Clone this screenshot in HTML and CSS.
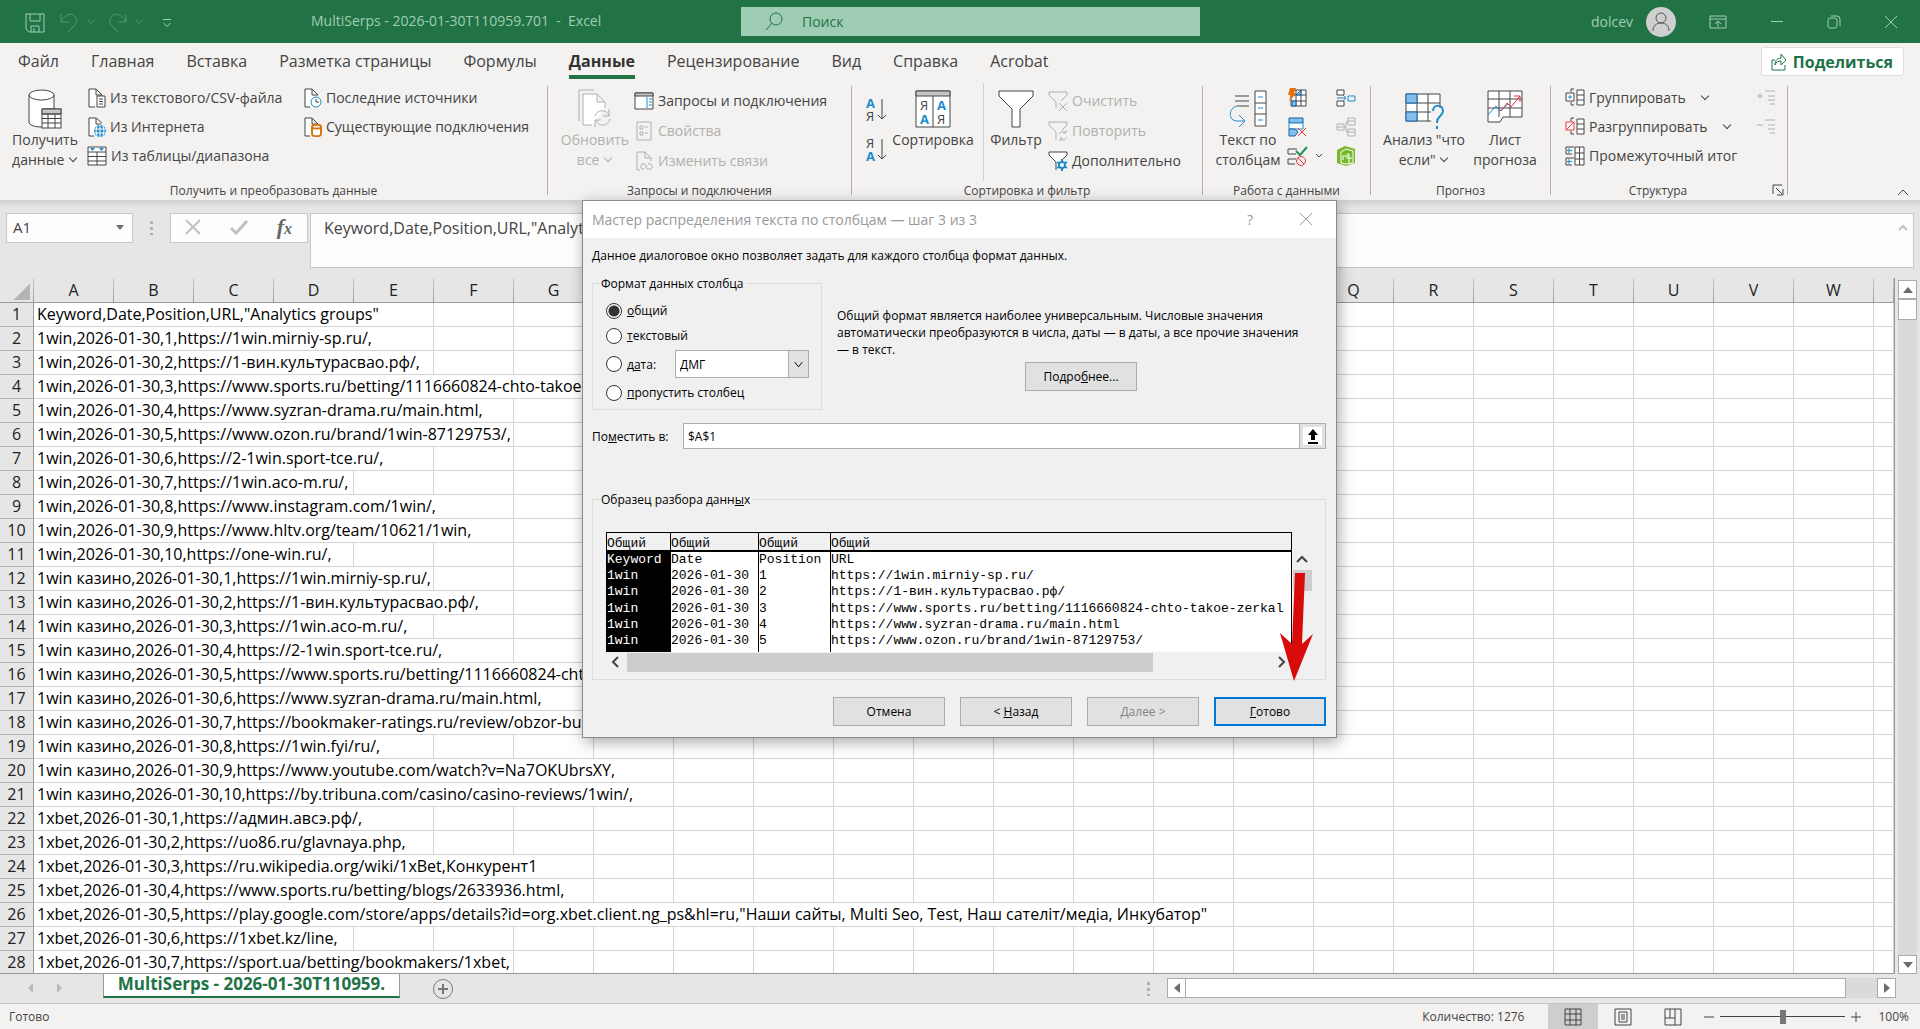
FILE: index.html
```html
<!DOCTYPE html>
<html lang="ru">
<head>
<meta charset="utf-8">
<title>MultiSerps - 2026-01-30T110959.701 - Excel</title>
<link rel="stylesheet" href="styles.css">
</head>
<body>
<header class="titlebar">
  <div class="qat">
    <button aria-label="Сохранить"><svg width="20" height="20" viewBox="0 0 20 20"><path d="M1 1h18v18H4l-3-3zM5 1v7h10V1M6 19v-6h8v6M9 15v4"/></svg></button>
    <button class="faded" aria-label="Отменить"><svg width="36" height="20" viewBox="0 0 36 20"><path d="M1 1v8h8M1 9C4 3 9 0 13 2s5 7 1 11l-6 6M28 7l3.500 3.500L35 7"/></svg></button>
    <button class="faded" aria-label="Вернуть"><svg width="36" height="20" viewBox="0 0 36 20"><path d="M18 1v8h-8M18 9C15 3 10 0 6 2s-6 7-2 11l6 6M28 7l3.500 3.500L35 7"/></svg></button>
    <button aria-label="Настройка панели"><svg width="10" height="10" viewBox="0 0 10 10"><path d="M1 1.500h8M1.500 5L5 8.500 8.500 5"/></svg></button>
  </div>
  <div class="doc-title">MultiSerps - 2026-01-30T110959.701&nbsp; -&nbsp; Excel</div>
  <label class="search"><svg width="18" height="20" viewBox="0 0 18 20"><circle cx="11" cy="7" r="6"/><path d="M7 11l-6 7"/></svg><input type="text" placeholder="Поиск" aria-label="Поиск"></label>
  <div class="account">
    <span>dolcev</span>
    <svg class="avatar" width="30" height="30" viewBox="0 0 30 30"><circle class="face" cx="15" cy="15" r="15"/><circle cx="15" cy="11" r="5"/><path d="M7 24c0-5 3-8 8-8s8 3 8 8"/></svg>
    <button aria-label="Параметры ленты"><svg width="18" height="14" viewBox="0 0 18 14"><path d="M1 1h16v12H1zM1 4h16M9 12V6M6 9l3-3 3 3"/></svg></button>
    <button aria-label="Свернуть"><svg width="14" height="14" viewBox="0 0 14 14"><path d="M1 6.500h12"/></svg></button>
    <button aria-label="Восстановить"><svg width="14" height="14" viewBox="0 0 14 14"><rect x="1" y="3" width="9" height="10" rx="2"/><path d="M4 1h6q3 0 3 3v7"/></svg></button>
    <button aria-label="Закрыть"><svg width="14" height="14" viewBox="0 0 14 14"><path d="M1 1l12 12M13 1L1 13"/></svg></button>
  </div>
</header>

<nav class="tabs">
  <a href="#">Файл</a><a href="#">Главная</a><a href="#">Вставка</a><a href="#">Разметка страницы</a><a href="#">Формулы</a><a href="#" class="active">Данные</a><a href="#">Рецензирование</a><a href="#">Вид</a><a href="#">Справка</a><a href="#">Acrobat</a>
  <button class="share"><svg width="16" height="18" viewBox="0 0 16 18"><path d="M4 7H1v10h13v-5M4 12c0-5 3-7 6-7V1l5 6-5 5V8c-3 0-5 1-6 4z"/></svg>Поделиться</button>
</nav>

<section class="ribbon">
  <div class="group g-get">
    <div class="tools">
      <button class="big"><svg width="36" height="40" viewBox="0 0 36 40"><path class="w" d="M2 6v27c0 3 5 5 13 5h2V20h10V6"/><ellipse class="w" cx="14.500" cy="6" rx="12.500" ry="5"/><rect class="w" x="15" y="20" width="19" height="19"/><path class="gray" d="M15 20h19v5H15z"/><path d="M15 25h19M15 29.500h19M15 34h19M21 25v14M28 25v14"/></svg><span>Получить<br>данные <i class="chev"></i></span></button>
      <div class="col">
        <button class="small"><svg width="19" height="20" viewBox="0 0 19 20"><path class="w" d="M8 19H2V1h7l6 6v3M9 1v6h6"/><path class="w" d="M10 8h8v11h-8zM12 11h4M12 13.500h4M12 16h4"/></svg>Из текстового/CSV-файла</button>
        <button class="small"><svg width="19" height="20" viewBox="0 0 19 20"><path class="w" d="M7 19H2V1h7l6 5M9 1v6h5"/><circle class="bf" cx="13" cy="14" r="6"/><path class="ws" d="M7 12h12M7 16h12M13 8v12M10 9q-2 5 0 10M16 9q2 5 0 10"/></svg>Из Интернета</button>
        <button class="small"><svg width="20" height="20" viewBox="0 0 20 20"><path class="w" d="M1 1h18v18H1z"/><path d="M1 6h18M1 10.500h18M1 15h18M10 6v13"/><path class="bf" d="M3 2h5L5.500 5zM12 2h5l-2.500 3z"/></svg>Из таблицы/диапазона</button>
      </div>
      <div class="col">
        <button class="small"><svg width="19" height="20" viewBox="0 0 19 20"><path class="w" d="M7 19H2V1h7l6 6M9 1v6h6"/><circle class="w b" cx="13" cy="14" r="5"/><path d="M13 11v3h3"/></svg>Последние источники</button>
        <button class="small"><svg width="19" height="20" viewBox="0 0 19 20"><path class="w" d="M7 19H2V1h7l6 6M9 1v6h6"/><path class="w o" d="M9 10v7c0 3 9 3 9 0v-7c0-3-9-3-9 0c0 2 9 2 9 0"/></svg>Существующие подключения</button>
      </div>
    </div>
    <h2>Получить и преобразовать данные</h2>
  </div>

  <div class="group g-query">
    <div class="tools">
      <button class="big" disabled><svg width="36" height="40" viewBox="0 0 36 40"><path d="M2 32V1h15"/><path class="w" d="M15 36H6V5h14l8 8v6M20 5v8h8"/><path d="M18 27c2-7 12-7 14 0M32 20v7h-6M33 30c-2 8-12 8-14 1M18 38v-7h6"/></svg><span>Обновить<br>все <i class="chev"></i></span></button>
      <div class="col wide">
        <button class="small"><svg width="20" height="20" viewBox="0 0 20 20"><path class="w" d="M1 2h18v16H1z"/><path class="gray" d="M1 2h18v3H1z"/><path class="b" d="M13 6v11M15 8h3M15 11h3M15 14h3"/></svg>Запросы и подключения</button>
        <button class="small" disabled><svg width="20" height="20" viewBox="0 0 20 20"><path d="M3 1h14v18H3zM6 5h3v3H6zM6 11h3v3H6zM11 6h3M11 12h3"/></svg>Свойства</button>
        <button class="small" disabled><svg width="20" height="20" viewBox="0 0 20 20"><path d="M6 19H3V1h8l6 6v3M11 1v6h6"/><path d="M10 18H8q-3-3 0-5h3q2 1 1 3M14 13h3q3 3 0 5h-4q-2-1 0-3"/></svg>Изменить связи</button>
      </div>
    </div>
    <h2>Запросы и подключения</h2>
  </div>

  <div class="group g-sort">
    <div class="tools">
      <div class="col order">
        <button aria-label="По возрастанию"><svg width="22" height="26" viewBox="0 0 22 26"><text class="bt" x="1" y="12">А</text><text x="1" y="25">Я</text><path d="M17 3v20M13 19l4 4 4-4"/></svg></button>
        <button aria-label="По убыванию"><svg width="22" height="26" viewBox="0 0 22 26"><text x="1" y="12">Я</text><text class="bt" x="1" y="25">А</text><path d="M17 3v20M13 19l4 4 4-4"/></svg></button>
      </div>
      <button class="big"><svg width="36" height="40" viewBox="0 0 36 40"><path class="w" d="M1 2h34v36H1z"/><path class="gray" d="M1 2h34v5H1z"/><path d="M18 7v31"/><text x="5" y="21">Я</text><text class="bt" x="5" y="35">А</text><text class="bt" x="22" y="21">А</text><text x="22" y="35">Я</text></svg><span>Сортировка</span></button>
      <button class="big filter"><svg width="36" height="40" viewBox="0 0 36 40"><path class="w" d="M1 2h34v5L22 20v18h-8V20L1 7z"/></svg><span>Фильтр</span></button>
      <div class="col wide">
        <button class="small" disabled><svg width="20" height="20" viewBox="0 0 20 20"><path d="M8 17v-6L1 4V1h18v3l-6 6M11 12l8 8M19 12l-8 8"/></svg>Очистить</button>
        <button class="small" disabled><svg width="20" height="20" viewBox="0 0 20 20"><path d="M8 19v-8L1 4V1h18v3l-5 5M11 13q3-4 7-1v-3M18 12h-3M19 16q-3 5-7 2v2M12 17h3"/></svg>Повторить</button>
        <button class="small"><svg width="20" height="20" viewBox="0 0 20 20"><path class="w" d="M8 19v-8L1 4V1h18v3l-5 5"/><path class="b q" d="M14 8v12M9 11l10 6M19 11L9 17"/><circle class="w b q" cx="14" cy="14" r="3"/></svg>Дополнительно</button>
      </div>
    </div>
    <h2>Сортировка и фильтр</h2>
  </div>

  <div class="group g-data">
    <div class="tools">
      <button class="big"><svg width="40" height="40" viewBox="0 0 40 40"><path d="M7 7h14M7 12h14M9 17h12"/><path class="w" d="M27 2h11v35H27zM27 14h11M27 25h11"/><path class="b" d="M30 8h5M30 19h5M30 31h5M9 17c-9 2-9 15 0 15h7M11 26l6 6-6 6"/></svg><span>Текст по<br>столбцам</span></button>
      <div class="col icons">
        <button aria-label="Мгновенное заполнение"><svg width="20" height="20" viewBox="0 0 20 20"><path class="w" d="M4 2h15v16H4zM4 7h15M4 13h15M9 2v16M14 2v16"/><path class="lb" d="M9 7l5-5v5zM5 13h4v5H5z"/><path class="of" d="M3 0h6L7 5h3l-8 8 2-6H1z"/></svg></button>
        <button aria-label="Удалить дубликаты"><svg width="20" height="20" viewBox="0 0 20 20"><path class="lb" d="M2 1h14v5H2z"/><path class="w b" d="M2 6h14v6H2z"/><path class="lb" d="M2 12h6l3 3-3 4H2z"/><path class="r" d="M11 11l8 8M19 11l-8 8"/></svg></button>
        <button aria-label="Проверка данных"><svg width="36" height="20" viewBox="0 0 36 20"><path d="M10 3H1v5h8M9 13H1v5h7"/><path class="g" d="M9 5l4 4 7-8"/><circle class="r" cx="14" cy="15" r="4.500"/><path class="r" d="M11 12l6 6"/><path d="M29 8l3 3 3-3"/></svg></button>
      </div>
      <div class="col icons">
        <button aria-label="Консолидация"><svg width="20" height="20" viewBox="0 0 20 20"><path class="w" d="M1 2h7v5H1zM1 13h7v5H1z"/><path class="b" d="M1 10h9M7 7l3 3-3 3M12 8h7v5h-7z"/></svg></button>
        <button disabled aria-label="Отношения"><svg width="20" height="20" viewBox="0 0 20 20"><path d="M1 7h7v6H1zM12 1h7v7h-7zM12 12h7v7h-7zM8 10h2V5h2M10 10v5h2M1 10h6M12 4h7M12 15h7"/></svg></button>
        <button aria-label="Управление моделью"><svg width="20" height="20" viewBox="0 0 20 20"><path class="gf" d="M1 4l8-4 10 3v14l-9 3-9-3z"/><path class="ws" d="M5 17V6l5-3 7 2v12l-7 1zM7 14v-4h5V7M10 12h6M13 8v9"/></svg></button>
      </div>
    </div>
    <h2>Работа с данными</h2>
  </div>

  <div class="group g-cast">
    <div class="tools">
      <button class="big"><svg width="40" height="40" viewBox="0 0 40 40"><path class="w" d="M2 5h34v27H2z"/><path d="M13 5v27M24 5v27M2 14h34M2 23h34"/><path class="lb" d="M2 5h11v9H2zM2 23h11v9H2z"/><path class="mask" d="M27 19h13v21H27z"/><path class="b q" d="M29 22c0-7 10-7 10 0 0 5-6 5-6 11v1M33 37v3"/></svg><span>Анализ "что<br>если" <i class="chev"></i></span></button>
      <button class="big"><svg width="38" height="40" viewBox="0 0 38 40"><path class="w" d="M2 2h34v26H17l-3 5H2z"/><path d="M13 2v26M24 2v26M2 10h34M2 19h34"/><path class="b" d="M2 26l8-9 4 5 8-7"/><path class="r" d="M15 22l6-8 4 4L34 7M28 7h6v6"/></svg><span>Лист<br>прогноза</span></button>
    </div>
    <h2>Прогноз</h2>
  </div>

  <div class="group g-outline">
    <div class="tools">
      <div class="col">
        <button class="small"><svg width="20" height="20" viewBox="0 0 20 20"><path d="M9 1H6v3M6 14v3h3"/><path class="w" d="M12 2h7v15h-7zM12 7h7M12 12h7M1 5h8v8H1z"/><path class="b" d="M5 7v4M3 9h4"/></svg>Группировать<i class="chev gap"></i></button>
        <button class="small"><svg width="20" height="20" viewBox="0 0 20 20"><path d="M9 1H6v3M6 14v3h3"/><path class="w" d="M12 2h7v15h-7zM12 7h7M12 12h7"/><path class="r w" d="M1 5h8v8H1zM2 12l6-6"/></svg>Разгруппировать<i class="chev gap"></i></button>
        <button class="small"><svg width="20" height="20" viewBox="0 0 20 20"><path class="w" d="M10 1h9v18h-9zM10 7h9M10 13h9M14.500 1v18"/><path d="M9 1H1v7h6M9 12H1v7h6"/><path class="b" d="M4 2v5M2 4.500h5M4 13v5M2 15.500h5"/></svg>Промежуточный итог</button>
      </div>
      <div class="col icons">
        <button disabled aria-label="Показать детали"><svg width="18" height="16" viewBox="0 0 18 16"><path d="M0 6h6M3 3v6M8 1h10M11 6h7M11 10h7M13 14h5"/></svg></button>
        <button disabled aria-label="Скрыть детали"><svg width="18" height="16" viewBox="0 0 18 16"><path d="M0 6h6M8 1h10M11 6h7M11 10h7M13 14h5"/></svg></button>
      </div>
    </div>
    <h2>Структура</h2>
    <button class="launcher" aria-label="Параметры структуры"><svg width="12" height="12" viewBox="0 0 12 12"><path d="M1 10V1h9M4 4l6 6M11 5v6H5"/></svg></button>
  </div>
  <button class="collapse" aria-label="Свернуть ленту"><svg width="12" height="8" viewBox="0 0 12 8"><path d="M1 7l5-5 5 5"/></svg></button>
</section>

<section class="formula">
  <button class="namebox">A1<svg width="8" height="5" viewBox="0 0 8 5"><path d="M0 0h8L4 5z"/></svg></button>
  <i class="grip"></i>
  <div class="fx">
    <button aria-label="Отмена"><svg width="16" height="16" viewBox="0 0 16 16"><path d="M1 1l14 14M15 1L1 15"/></svg></button>
    <button aria-label="Ввод"><svg width="18" height="16" viewBox="0 0 18 16"><path class="tick" d="M1 9l5 5L17 2"/></svg></button>
    <button class="fn" aria-label="Вставить функцию"><i>f</i><i class="sub">x</i></button>
  </div>
  <div class="input">Keyword,Date,Position,URL,"Analytics groups"<svg width="10" height="7" viewBox="0 0 10 7"><path d="M1 6l4-4 4 4"/></svg></div>
</section>

<main class="sheet">
  <div class="grid"><table id="cells"><thead></thead><tbody></tbody></table></div>
  <div class="vscroll"><button aria-label="Вверх"><svg width="10" height="6" viewBox="0 0 10 6"><path d="M0 6h10L5 0z"/></svg></button><span class="thumb"></span><span class="track"></span><button aria-label="Вниз"><svg width="10" height="6" viewBox="0 0 10 6"><path d="M0 0h10L5 6z"/></svg></button></div>
</main>

<div class="sheetbar">
  <button class="nav" aria-label="Предыдущий лист"><svg width="5" height="10" viewBox="0 0 5 10"><path d="M5 0v10L0 5z"/></svg></button>
  <button class="nav" aria-label="Следующий лист"><svg width="5" height="10" viewBox="0 0 5 10"><path d="M0 0v10l5-5z"/></svg></button>
  <a href="#" class="sheet-tab">MultiSerps - 2026-01-30T110959.</a>
  <button class="add" aria-label="Новый лист"><svg width="22" height="22" viewBox="0 0 22 22"><circle cx="11" cy="11" r="9.500"/><path class="q" d="M11 6v10M6 11h10"/></svg></button>
  <i class="grip"></i>
  <div class="hscroll"><button aria-label="Влево"><svg width="6" height="10" viewBox="0 0 6 10"><path d="M6 0v10L0 5z"/></svg></button><span class="thumb"></span><span class="track"></span><button aria-label="Вправо"><svg width="6" height="10" viewBox="0 0 6 10"><path d="M0 0v10l6-5z"/></svg></button></div>
</div>

<footer class="status">
  <span>Готово</span>
  <span class="count">Количество: 1276</span>
  <button class="view on" aria-label="Обычный"><svg width="18" height="18" viewBox="0 0 18 18"><path d="M1 1h16v16H1zM1 6h16M1 12h16M6 1v16M12 1v16"/></svg></button>
  <button class="view" aria-label="Разметка"><svg width="18" height="18" viewBox="0 0 18 18"><path d="M1 1h16v16H1zM5 4h8v10H5zM7 7h4M7 9h4M7 11h4"/></svg></button>
  <button class="view" aria-label="Страничный"><svg width="18" height="18" viewBox="0 0 18 18"><path d="M1 1h16v16H1zM1 10h10V1M6 1v9M11 10v7"/></svg></button>
  <button class="zoom" aria-label="Уменьшить"><svg width="10" height="10" viewBox="0 0 10 10"><path d="M0 5h10"/></svg></button>
  <input type="range" aria-label="Масштаб" min="0" max="100" value="50">
  <button class="zoom" aria-label="Увеличить"><svg width="10" height="10" viewBox="0 0 10 10"><path d="M0 5h10M5 0v10"/></svg></button>
  <span class="percent">100%</span>
</footer>

<div class="dialog" role="dialog" aria-labelledby="wizard">
  <div class="caption"><h1 id="wizard">Мастер распределения текста по столбцам — шаг 3 из 3</h1><button class="help">?</button><button aria-label="Закрыть"><svg width="14" height="14" viewBox="0 0 14 14"><path d="M1 1l12 12M13 1L1 13"/></svg></button></div>
  <div class="content">
    <p>Данное диалоговое окно позволяет задать для каждого столбца формат данных.</p>
    <div class="format">
      <fieldset class="types">
        <legend>Формат данных столбца</legend>
        <label><input type="radio" name="t" checked><span><u>о</u>бщий</span></label>
        <label><input type="radio" name="t"><span><u>т</u>екстовый</span></label>
        <div class="date"><label><input type="radio" name="t"><span>д<u>а</u>та:</span></label><div class="combo"><select aria-label="Формат даты"><option>ДМГ</option></select><svg width="20" height="24" viewBox="0 0 20 24"><path d="M6 10l4 5 4-5"/></svg></div></div>
        <label><input type="radio" name="t"><span><u>п</u>ропустить столбец</span></label>
      </fieldset>
      <div class="hint">
        <p>Общий формат является наиболее универсальным. Числовые значения автоматически преобразуются в числа, даты — в даты, а все прочие значения — в текст.</p>
        <button class="btn">Подро<u>б</u>нее...</button>
      </div>
    </div>
    <div class="dest"><label for="dest">По<u>м</u>естить в:</label><input id="dest" type="text" value="$A$1"><button aria-label="Выбрать ячейку"><svg width="12" height="16" viewBox="0 0 12 16"><path d="M6 1l5 6H8v5H4V7H1zM1 14h10v2H1z"/></svg></button></div>
    <fieldset class="preview">
      <legend>Образец разбора данн<u>ы</u>х</legend>
      <div class="pane">
        <table>
          <colgroup><col class="c1"><col class="c2"><col class="c3"><col></colgroup>
          <thead><tr><th>Общий</th><th>Общий</th><th>Общий</th><th>Общий</th></tr></thead>
          <tbody>
            <tr><td>Keyword</td><td>Date</td><td>Position</td><td>URL</td></tr>
            <tr><td>1win</td><td>2026-01-30</td><td>1</td><td>https://1win.mirniy-sp.ru/</td></tr>
            <tr><td>1win</td><td>2026-01-30</td><td>2</td><td>https://1-вин.культурасвао.рф/</td></tr>
            <tr><td>1win</td><td>2026-01-30</td><td>3</td><td>https://www.sports.ru/betting/1116660824-chto-takoe-zerkal</td></tr>
            <tr><td>1win</td><td>2026-01-30</td><td>4</td><td>https://www.syzran-drama.ru/main.html</td></tr>
            <tr><td>1win</td><td>2026-01-30</td><td>5</td><td>https://www.ozon.ru/brand/1win-87129753/</td></tr>
          </tbody>
        </table>
        <div class="pv"><svg width="12" height="8" viewBox="0 0 12 8"><path d="M1 7l5-5 5 5"/></svg><span></span></div>
      </div>
      <div class="ph"><svg width="8" height="12" viewBox="0 0 8 12"><path d="M7 1L2 6l5 5"/></svg><span></span><svg width="8" height="12" viewBox="0 0 8 12"><path d="M1 1l5 5-5 5"/></svg></div>
    </fieldset>
    <div class="actions"><button class="btn">Отмена</button><button class="btn">&lt; <u>Н</u>азад</button><button class="btn" disabled>Далее &gt;</button><button class="btn primary"><u>Г</u>отово</button></div>
  </div>
  <svg class="arrow" width="34" height="110" viewBox="0 0 34 110"><path d="M16 1h10l-3 71 11-10-19 47L1 61l12 11z"/></svg>
</div>
<script src="script.js"></script>
</body>
</html>
```
FILE: styles.css
```css
* { box-sizing: border-box; }
body { margin: 0; height: 100vh; display: flex; flex-direction: column; overflow: hidden; position: relative; background: #e6e6e6; color: #444; font: 15px/20px "Open Sans", "Noto Sans", sans-serif; }
button { font: inherit; color: inherit; background: none; border: 0; padding: 0; display: flex; align-items: center; white-space: nowrap; }
svg { flex: none; fill: none; stroke: currentColor; }
h1, h2, p { margin: 0; font-weight: normal; }
a { color: inherit; text-decoration: none; }

.titlebar { height: 43px; flex: none; background: #217346; color: #a0cdb4; display: flex; align-items: center; position: relative; }
.qat { display: flex; align-items: center; gap: 15px; padding-left: 25px; width: 311px; padding-top: 3px; }
.qat .faded { color: #4f9a70; margin-right: -3px; }
.qat button:last-child { margin-left: 6px; }
.doc-title { width: 430px; font-size: 14px; padding-bottom: 2px; white-space: nowrap; }
.search { width: 459px; height: 29px; background: #9fcdb3; color: #217346; display: flex; align-items: center; gap: 19px; padding-left: 24px; }
.search input { border: 0; background: none; font: inherit; font-size: 14px; color: inherit; outline: 0; padding: 0; }
.search input::placeholder { color: #217346; opacity: 1; }
.account { margin-left: auto; display: flex; align-items: center; padding-right: 22px; font-size: 14px; }
.account button { margin-left: 43px; }
.account .avatar { margin-left: 13px; }
.account .avatar + button { margin-left: 33px; }
.avatar { color: #555; }
.avatar .face { fill: #cfcfcf; stroke: none; }

.tabs { height: 36px; flex: none; background: #f3f2f1; display: flex; gap: 32px; padding: 0 16px 0 18px; font-size: 16px; line-height: 36px; }
.tabs .active { font-weight: bold; border-bottom: 4px solid #217346; color: #333; }
.share { margin: 4px 0 3px auto; background: #fff; border: 1px solid #e1dfdd; border-radius: 3px; color: #217346; font-weight: bold; padding: 0 10px 0 9px; gap: 6px; }

.ribbon { height: 121px; flex: none; background: #f3f2f1; display: flex; position: relative; padding-top: 7px; }
.group { height: 109px; display: flex; flex-direction: column; border-right: 1px solid #b3b0ad; position: relative; flex: none; }
.tools { display: flex; height: 98px; margin-top: -3px; flex: none; }
.group h2 { font-size: 12px; line-height: 20px; text-align: center; }
.g-get { width: 548px; }
.g-get .tools { padding-left: 6px; }
.g-query { width: 304px; }
.g-query .tools { padding-left: 8px; }
.g-sort { width: 351px; }
.g-sort .tools { padding-left: 10px; }
.g-data { width: 168px; }
.g-data .tools { padding-left: 9px; }
.g-cast { width: 180px; }
.g-cast .tools { padding-left: 4px; }
.g-outline { width: 237px; }
.g-outline .tools { padding-left: 14px; }
.g-outline h2 { padding-right: 22px; }
.big { flex-direction: column; align-items: center; width: 78px; padding-top: 6px; line-height: 20px; font-size: 14px; text-align: center; flex: none; }
.big svg { margin-bottom: 1px; }
.chev { display: inline-block; width: 6px; height: 6px; border: solid currentColor; border-width: 0 1px 1px 0; transform: rotate(45deg); margin: 0 2px 4px 2px; }
.chev.gap { margin-left: 12px; }
.col { display: flex; flex-direction: column; flex: none; }
.col button { height: 29px; }
.col.wide { padding-top: 3px; }
.col.wide button { height: 30px; }
.g-get .col { width: 216px; padding-left: 3px; }
.small { gap: 4px; font-size: 14px; }
button:disabled { color: #b1b0ae; }
.order { width: 30px; padding: 11px 0 0 3px; gap: 11px; }
.g-sort .big { width: 82px; margin-right: 9px; }
.g-sort .filter { border-left: 1px solid #d2d0ce; width: 65px; margin-right: 0; }
.g-data .big { width: 72px; }
.icons { width: 49px; padding-left: 3px; }
.g-cast .big { width: 64px; }
.g-cast .big:first-child { width: 98px; }
.g-outline .col:first-child { width: 189px; }
.launcher { position: absolute; right: 3px; bottom: -1px; }
.collapse { position: absolute; right: 11px; bottom: 4px; }
.w { fill: #fff; }
.gray { fill: #c8c6c4; }
.b { stroke: #1e8bcd; }
.q { stroke-width: 2; }
.bf { fill: #1e8bcd; stroke: none; }
.lb { fill: #83beec; stroke: #1664a7; }
.r { stroke: #e8373e; }
.g { stroke: #21935b; stroke-width: 2; }
.gf { fill: #77b82a; stroke: none; }
.o { stroke: #d9730d; stroke-width: 2; }
.of { fill: #e8700a; stroke: none; }
.ws { stroke: #fff; }
.mask { fill: #f3f2f1; stroke: none; }
.ribbon text { fill: #444; stroke: none; font-size: 13px; }
.ribbon .bt { fill: #1e8bcd; font-weight: bold; }

.formula { flex: none; height: 78px; display: flex; align-items: flex-start; padding: 13px 6px 0; background: linear-gradient(#cfcfcf, #e6e6e6 8px); }
.namebox { width: 127px; height: 30px; background: #fdfdfd; border: 1px solid #c6c6c6; justify-content: space-between; padding: 0 8px 2px 6px; }
.namebox svg, .vscroll svg, .hscroll svg, .nav svg { fill: #6b6b6b; stroke: none; }
.grip { width: 3px; height: 14px; background: repeating-linear-gradient(#b0b0b0 0 3px, transparent 3px 6px); margin: 8px 17px 0; }
.fx { width: 138px; height: 30px; background: #fdfdfd; border: 1px solid #c6c6c6; display: flex; align-items: center; justify-content: space-between; padding: 0 15px 2px 14px; color: #c0c0c0; stroke-width: 2; }
.tick { stroke-width: 3; }
.fn { font: bold 22px/24px "Liberation Serif", serif; color: #666; }
.fn .sub { font-size: 16px; padding-top: 4px; }
.formula .input { margin-left: 2px; flex: 1; height: 55px; background: #fdfdfd; border: 1px solid #c6c6c6; padding: 4px 5px 0 13px; display: flex; justify-content: space-between; color: #444; font-size: 16px; }
.formula .input svg { stroke: #c0c0c0; stroke-width: 2; margin-top: 6px; }

.sheet { flex: 1; min-height: 0; display: flex; gap: 3px; padding-right: 3px; }
.grid { flex: 1; overflow: hidden; border-right: 1px solid #999; border-bottom: 1px solid #999; color: #000; font-size: 16px; }
.grid table { width: 100%; table-layout: fixed; border-collapse: separate; border-spacing: 0; }
.grid th, .grid td { height: 24px; padding: 0; font-weight: normal; line-height: 23px; border: solid #d4d4d4; border-width: 0 1px 1px 0; background: #fff; white-space: nowrap; overflow: hidden; }
.grid td { padding-left: 3px; }
.grid th { background: #e6e6e6; color: #222; border-color: #b5b5b5; text-align: center; }
.grid tbody th { border-right-color: #999; }
.grid thead th { height: 25px; border-bottom-color: #999; border-image: linear-gradient(#ccc, #999) 1; border-image-width: 0 1px 1px 0; width: 80px; }
.grid thead th:first-child { width: 34px; }
.grid thead th:last-child { width: auto; }
.corner { display: block; margin: 4px 3px 2px 14px; width: 16px; height: 17px; background: linear-gradient(to bottom right, transparent 50%, #b4b4b4 50%); }
.vscroll { width: 19px; display: flex; flex-direction: column; background: #dadada; margin-top: 2px; }
.vscroll button, .hscroll button { background: #fff; border: 1px solid #ababab; justify-content: center; flex: none; width: 19px; height: 19px; }
.vscroll .thumb { height: 21px; background: #fff; border: 1px solid #ababab; }
.track { flex: 1; }

.sheetbar { height: 30px; flex: none; display: flex; align-items: flex-start; border-bottom: 1px solid #c6c6c6; padding-left: 28px; }
.nav { height: 28px; margin-right: 24px; }
.nav svg { fill: #b8b8b8; }
.sheet-tab { margin-left: 17px; width: 297px; background: #fff; color: #217346; font-weight: bold; text-align: center; padding-bottom: 2px; border: solid #999; border-width: 0 1px; border-bottom: 2px solid #217346; font-size: 17px; white-space: nowrap; }
.add { margin: 4px auto 0 32px; color: #777; }
.hscroll { display: flex; width: 729px; height: 20px; margin: 4px 24px 0 0; background: #dadada; }
.hscroll button, .hscroll .thumb { height: 20px; }
.hscroll .thumb { width: 660px; background: #fff; border: 1px solid #ababab; border-left: 0; }

.status { height: 25px; flex: none; background: #f3f2f1; display: flex; align-items: center; font-size: 12px; padding: 0 11px 0 9px; }
.count { margin: 0 24px 0 auto; }
.view { width: 50px; height: 25px; justify-content: center; }
.view.on { background: #cfcecd; }
.zoom { margin: 0 6px; }
.status input { appearance: none; width: 125px; height: 1px; margin: 0; background: #444; }
.status input::-webkit-slider-thumb { appearance: none; width: 6px; height: 14px; background: #777; }
.percent { margin-left: 11px; }

.dialog { position: absolute; left: 582px; top: 200px; width: 755px; height: 538px; background: #f0f0f0; border: 1px solid #8a8a8a; box-shadow: 2px 4px 14px rgba(0,0,0,.35); color: #000; font-size: 12px; line-height: 17px; }
.caption { height: 37px; background: #fff; color: #999; display: flex; align-items: center; padding: 0 23px 1px 9px; font-size: 14px; }
.caption h1 { font-size: 14px; flex: 1; }
.help { margin-right: 46px; }
.content { padding: 9px 10px 0 9px; }
fieldset { margin: 0; border: 1px solid #dcdcdc; min-width: 0; }
legend { padding: 0 2px; }
.format { display: flex; gap: 15px; margin-top: 11px; }
.types { width: 230px; height: 135px; padding: 6px 12px 0 13px; }
.types legend, .preview legend { margin-left: -7px; }
.types label { display: flex; align-items: center; gap: 5px; height: 25px; }
.types input { appearance: none; width: 16px; height: 16px; border: 1px solid #333; border-radius: 50%; background: #fff; margin: 0; }
.types input:checked { background: radial-gradient(#333 5px, #fff 6px); }
.date { display: flex; justify-content: space-between; align-items: center; height: 32px; }
.combo { position: relative; width: 134px; height: 28px; }
.combo select { appearance: none; width: 100%; height: 100%; border: 1px solid #adadad; border-radius: 0; background: #fff; font: inherit; padding: 0 4px; }
.combo svg { position: absolute; right: 1px; top: 1px; width: 20px; height: 26px; background: #e1e1e1; border-left: 1px solid #adadad; }
.hint { flex: 1; padding-top: 32px; display: flex; flex-direction: column; align-items: flex-start; }
.hint p { padding-right: 20px; }
.btn { width: 112px; height: 29px; background: #e1e1e1; border: 1px solid #adadad; justify-content: center; white-space: pre; }
.btn:disabled { color: #838383; }
.hint .btn { margin: 4px 0 0 188px; }
.dest { display: flex; align-items: center; margin-top: 13px; height: 26px; }
.dest label { width: 91px; }
.dest input { flex: 1; height: 26px; border: 1px solid #adadad; font: inherit; padding: 0 4px; min-width: 0; }
.dest button { width: 27px; height: 26px; border: 1px solid #adadad; background: #fff; box-shadow: inset 0 0 0 3px #e1e1e1; justify-content: center; margin-left: -1px; }
.dest svg { fill: #000; stroke: none; }
.preview { margin-top: 42px; height: 189px; padding: 24px 13px 0; }
.pane { display: flex; height: 120px; }
.pane table { width: 686px; table-layout: fixed; border-collapse: separate; border-spacing: 0; font: 13px/16px "Liberation Mono", monospace; border: 1px solid #000; border-bottom: 0; background: #fff; flex: none; }
.pane th, .pane td { padding: 0; text-align: left; font-weight: normal; border-right: 1px solid #000; overflow: hidden; white-space: nowrap; height: 16px; }
.pane th { height: 19px; padding-top: 4px; line-height: 13px; background: #f0f0f0; border-bottom: 2px solid #000; }
.pane tr > :last-child { border-right: 0; }
.pane td:first-child { background: #000; color: #fff; }
.c1 { width: 64px; }
.c2 { width: 88px; }
.c3 { width: 72px; }
.pane tr:last-child td { height: 19px; vertical-align: top; }
.pv { width: 20px; display: flex; flex-direction: column; align-items: center; padding-top: 23px; gap: 7px; }
.pv span { width: 19px; height: 21px; background: #cdcdcd; }
.pv svg, .ph svg { stroke: #444; stroke-width: 2; }
.ph { display: flex; align-items: center; height: 20px; width: 686px; padding: 0 6px 0 5px; gap: 8px; }
.ph span { width: 526px; height: 19px; background: #cdcdcd; margin-right: auto; }
.actions { display: flex; justify-content: flex-end; gap: 15px; margin-top: 17px; }
.primary { border: 2px solid #0078d7; }
.arrow { position: absolute; left: 696px; top: 371px; fill: #d90a0a; stroke: none; }
```
FILE: script.js
```js
// Each entry: [text, number of columns the text spills over].
const rows = [
  ['Keyword,Date,Position,URL,"Analytics groups"', 5],
  ['1win,2026-01-30,1,https://1win.mirniy-sp.ru/,', 5],
  ['1win,2026-01-30,2,https://1-вин.культурасвао.рф/,', 5],
  ['1win,2026-01-30,3,https://www.sports.ru/betting/1116660824-chto-takoe-zerkalo,', 8],
  ['1win,2026-01-30,4,https://www.syzran-drama.ru/main.html,', 6],
  ['1win,2026-01-30,5,https://www.ozon.ru/brand/1win-87129753/,', 6],
  ['1win,2026-01-30,6,https://2-1win.sport-tce.ru/,', 5],
  ['1win,2026-01-30,7,https://1win.aco-m.ru/,', 4],
  ['1win,2026-01-30,8,https://www.instagram.com/1win/,', 6],
  ['1win,2026-01-30,9,https://www.hltv.org/team/10621/1win,', 6],
  ['1win,2026-01-30,10,https://one-win.ru/,', 4],
  ['1win казино,2026-01-30,1,https://1win.mirniy-sp.ru/,', 5],
  ['1win казино,2026-01-30,2,https://1-вин.культурасвао.рф/,', 6],
  ['1win казино,2026-01-30,3,https://1win.aco-m.ru/,', 5],
  ['1win казино,2026-01-30,4,https://2-1win.sport-tce.ru/,', 6],
  ['1win казино,2026-01-30,5,https://www.sports.ru/betting/1116660824-chto-takoe-zerkalo,', 9],
  ['1win казино,2026-01-30,6,https://www.syzran-drama.ru/main.html,', 7],
  ['1win казино,2026-01-30,7,https://bookmaker-ratings.ru/review/obzor-bukmekera,', 8],
  ['1win казино,2026-01-30,8,https://1win.fyi/ru/,', 5],
  ['1win казино,2026-01-30,9,https://www.youtube.com/watch?v=Na7OKUbrsXY,', 8],
  ['1win казино,2026-01-30,10,https://by.tribuna.com/casino/casino-reviews/1win/,', 8],
  ['1xbet,2026-01-30,1,https://админ.авсэ.рф/,', 5],
  ['1xbet,2026-01-30,2,https://uo86.ru/glavnaya.php,', 5],
  ['1xbet,2026-01-30,3,https://ru.wikipedia.org/wiki/1xBet,Конкурент1', 7],
  ['1xbet,2026-01-30,4,https://www.sports.ru/betting/blogs/2633936.html,', 7],
  ['1xbet,2026-01-30,5,https://play.google.com/store/apps/details?id=org.xbet.client.ng_ps&hl=ru,"Наши сайты, Multi Seo, Test, Наш сателіт/медіа, Инкубатор"', 15],
  ['1xbet,2026-01-30,6,https://1xbet.kz/line,', 4],
  ['1xbet,2026-01-30,7,https://sport.ua/betting/bookmakers/1xbet,', 6]
];
const columns = 'ABCDEFGHIJKLMNOPQRSTUVW';
const add = (parent, tag, text) => {
  const cell = document.createElement(tag);
  if (text) cell.textContent = text;
  parent.append(cell);
  return cell;
};
const table = document.getElementById('cells');
const head = add(table.tHead, 'tr');
const corner = add(head, 'th');
add(corner, 'span').className = 'corner';
[...columns].forEach(letter => add(head, 'th', letter));
add(head, 'th');
rows.forEach(([text, span], index) => {
  const row = add(table.tBodies[0], 'tr');
  add(row, 'th', String(index + 1));
  add(row, 'td', text).colSpan = span;
  for (let i = span; i <= columns.length; i++) add(row, 'td');
});
```
